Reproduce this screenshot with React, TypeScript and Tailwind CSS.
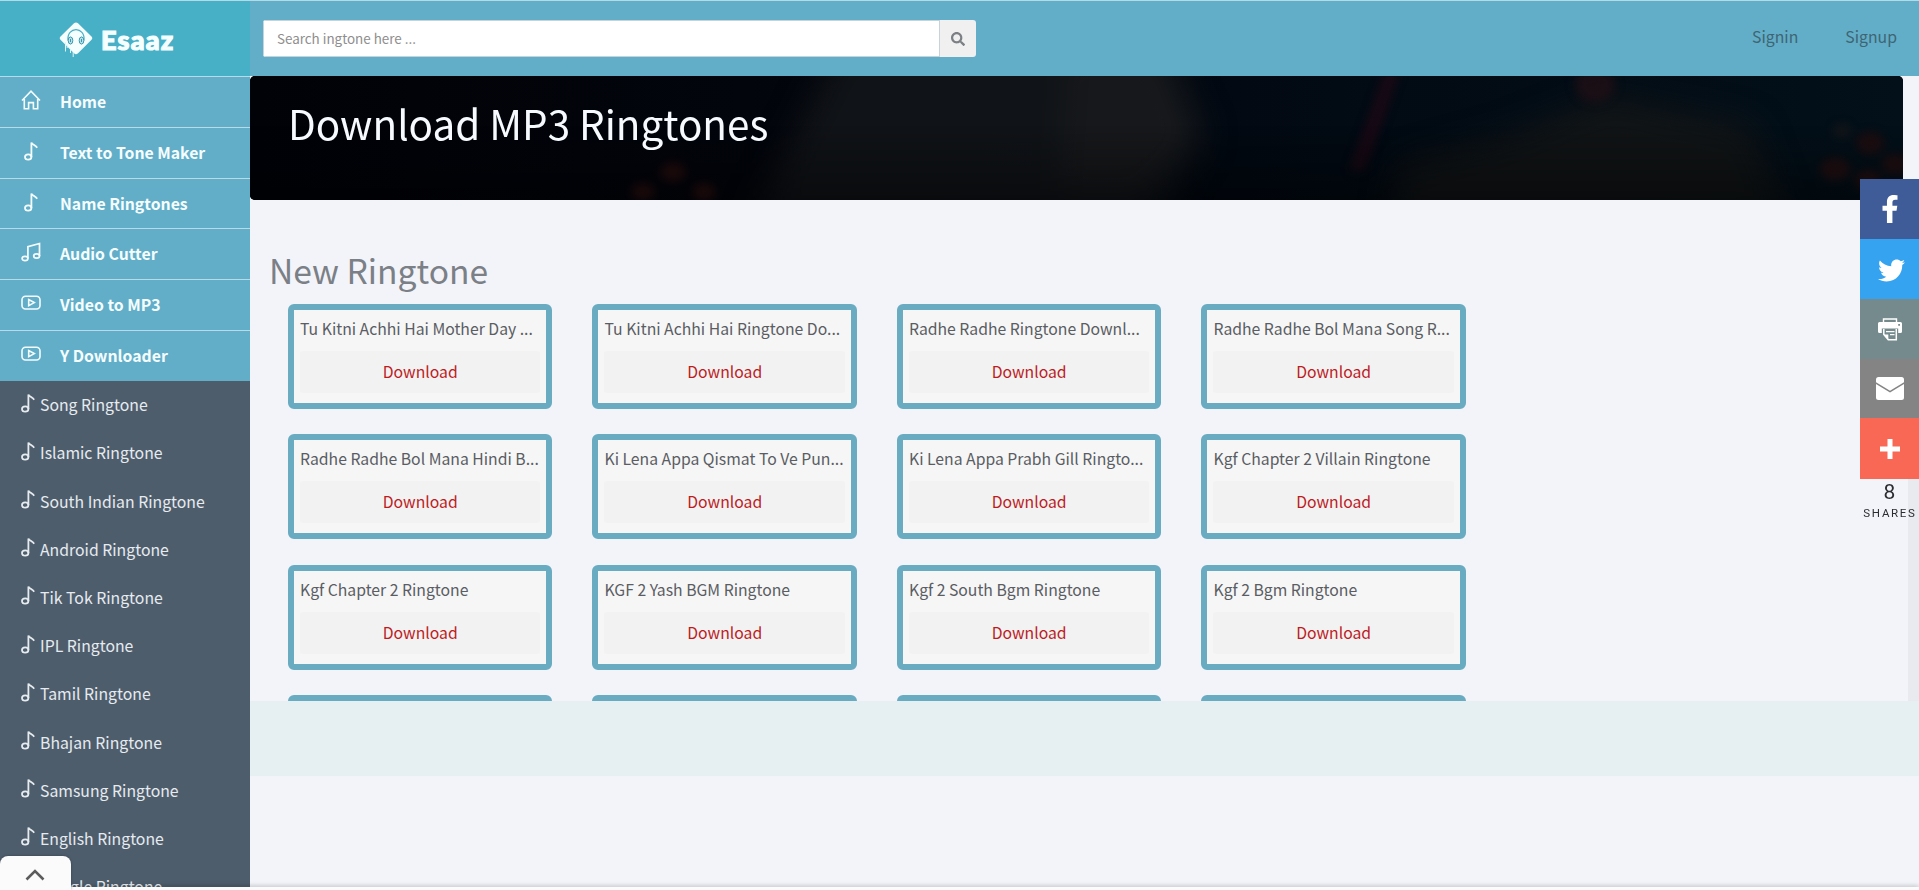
import React from "react";
import { FaFacebookF, FaTwitter, FaSearch } from "react-icons/fa";

type IconProps = { className?: string };

function HomeIcon({ className }: IconProps) {
  return (
    <svg className={className} viewBox="0 0 20 20" width="20" height="20" fill="none" stroke="currentColor" strokeWidth="1.6">
      <path d="M1 10.500 10 1.200l9 9.300M3.300 9v9.800h4.300v-6.200h4.800v6.200h4.300V9" />
    </svg>
  );
}

function NoteIcon({ className }: IconProps) {
  return (
    <svg className={className} viewBox="0 0 14 20" width="14" height="20" fill="none" stroke="currentColor" strokeWidth="1.8">
      <ellipse cx="4.200" cy="16" rx="3.200" ry="2.700" />
      <path d="M7.400 16V1.500c.8 2 4 2.800 5.800 5.200" />
    </svg>
  );
}

function DoubleNoteIcon({ className }: IconProps) {
  return (
    <svg className={className} viewBox="0 0 20 20" width="20" height="20" fill="none" stroke="currentColor" strokeWidth="1.700">
      <ellipse cx="4" cy="16.500" rx="2.900" ry="2.200" />
      <ellipse cx="15.600" cy="14" rx="2.900" ry="2.200" />
      <path d="M6.900 16.500V4.600L18.500 1.500V14" />
    </svg>
  );
}

function VideoIcon({ className }: IconProps) {
  return (
    <svg className={className} viewBox="0 0 20 16" width="20" height="16" fill="none" stroke="currentColor" strokeWidth="1.600">
      <rect x="1" y="1.200" width="18" height="12.800" rx="3.500" />
      <path d="M7.700 4.500v6.200l5.600-3.100z" />
    </svg>
  );
}

function LogoMark() {
  return (
    <svg width="34" height="36" viewBox="0 0 34 36" className="shrink-0">
      <path d="M15 1.300q2-1.700 4 0L32.500 14.500q1.500 1.700 0 3.200L19 31.300q-2 1.700-4 0L1.500 17.700q-1.500-1.500 0-3.200z" fill="#f6ffff" />
      <path d="M6.500 20v9.500M8.200 22v4M14.200 30v5M11.500 27v4" stroke="#dff5f8" strokeWidth="1" />
      <path d="M9 18.500C7.500 4 26.500 4 25 18.500" fill="none" stroke="#47b0c7" strokeWidth="1.200" />
      <ellipse cx="11.500" cy="18.500" rx="2.300" ry="3.600" fill="#b9e2ea" stroke="#3d98ae" strokeWidth="1" />
      <ellipse cx="22.500" cy="18.500" rx="2.300" ry="3.600" fill="#b9e2ea" stroke="#3d98ae" strokeWidth="1" />
      <path d="M11.500 17v3M22.500 17v3" stroke="#3d98ae" strokeWidth="1" />
    </svg>
  );
}

function PrinterIcon() {
  return (
    <svg width="24" height="23" viewBox="0 0 24 23" fill="none">
      <path d="M5.500 5.500V1h13v4.500" stroke="#fff" strokeWidth="1.400" />
      <path fillRule="evenodd" d="M1.500 4h21q1.500 0 1.500 1.500v8q0 1.500-1.500 1.500h-2.300v-4.500H3.800V15H1.500Q0 15 0 13.500v-8Q0 4 1.500 4zM20.200 6v1.800H22V6z" fill="#fff" />
      <path d="M5.800 11v5.500l4.500 5.300h8V11" stroke="#fff" strokeWidth="1.500" />
      <path d="M5.800 16.500h4.500V22zM8 13h8.500v1.200H8zM12 16h4.500v1.200H12z" fill="#fff" />
    </svg>
  );
}

function MailIcon() {
  return (
    <svg width="28" height="23" viewBox="0 0 28 23" fill="#fff">
      <path d="M2.500 0h23Q28 0 28 2.500v2.800L14 13.800 0 5.300V2.500Q0 0 2.500 0z" />
      <path d="M0 7l14 8.500L28 7v13.500q0 2.500-2.500 2.500h-23Q0 23 0 20.500z" />
    </svg>
  );
}

const navItems = [
  { label: "Home", Icon: HomeIcon },
  { label: "Text to Tone Maker", Icon: NoteIcon },
  { label: "Name Ringtones", Icon: NoteIcon },
  { label: "Audio Cutter", Icon: DoubleNoteIcon },
  { label: "Video to MP3", Icon: VideoIcon },
  { label: "Y Downloader", Icon: VideoIcon },
];

const categories = ["Song", "Islamic", "South Indian", "Android", "Tik Tok", "IPL", "Tamil", "Bhajan", "Samsung", "English", "Google"];

const ringtones = [
  "Tu Kitni Achhi Hai Mother Day ...",
  "Tu Kitni Achhi Hai Ringtone Do...",
  "Radhe Radhe Ringtone Downl...",
  "Radhe Radhe Bol Mana Song R...",
  "Radhe Radhe Bol Mana Hindi B...",
  "Ki Lena Appa Qismat To Ve Pun...",
  "Ki Lena Appa Prabh Gill Ringto...",
  "Kgf Chapter 2 Villain Ringtone",
  "Kgf Chapter 2 Ringtone",
  "KGF 2 Yash BGM Ringtone",
  "Kgf 2 South Bgm Ringtone",
  "Kgf 2 Bgm Ringtone",
];

const upcoming = [0, 1, 2, 3];

function Sidebar() {
  return (
    <aside className="flex w-[250px] shrink-0 flex-col overflow-hidden bg-[#4e5d6c]">
      <div className="flex h-[75px] shrink-0 items-center gap-[8px] bg-[#47b0c7] pl-[59px] pt-[3px]">
        <LogoMark />
        <span className="pb-[2px] font-['Lato',sans-serif] text-[27px] font-black leading-none tracking-[1.200px] text-[#f6ffff] [-webkit-text-stroke:1.200px_#f6ffff]">Esaaz</span>
      </div>
      <nav className="flex h-[305px] shrink-0 flex-col bg-[#62aec8]">
        {navItems.map(({ label, Icon }) => (
          <a key={label} className="flex flex-1 items-center border-t border-[#b5dce8] text-[15.800px] font-bold text-[#f5fdff]">
            <span className="flex w-[60px] justify-center pb-[4px] pl-[2px]">
              <Icon />
            </span>
            <span className="leading-5">{label}</span>
          </a>
        ))}
      </nav>
      <ul className="shrink-0">
        {categories.map((name) => (
          <li key={name} className="flex h-[48.200px] items-center pl-[21px] text-[15.800px] text-[#e6ebf0]">
            <NoteIcon className="mb-[5px] mr-[5px]" />
            <span>{name} Ringtone</span>
          </li>
        ))}
      </ul>
    </aside>
  );
}

function Header() {
  return (
    <header className="flex h-[75px] shrink-0 items-center justify-between bg-[#62aec8] pl-[13px] pr-[22px]">
      <div className="flex h-[37px] w-[713px] overflow-hidden rounded-[3px]">
        <div className="flex flex-1 items-center border border-[#c6d3d9] bg-white pl-[13px] text-[13.400px] text-[#8e8e8e]">Search ingtone here ...</div>
        <button className="flex w-[36px] items-center justify-center bg-[#f0f0f0] text-[#7c8084]">
          <FaSearch size={14} />
        </button>
      </div>
      <div className="flex gap-[47px] pb-[3px] text-[15.800px] text-[#3f6573]">
        <a>Signin</a>
        <a>Signup</a>
      </div>
    </header>
  );
}

function HeroBackdrop() {
  return (
    <svg className="absolute inset-0" width="1653" height="124" viewBox="0 0 1653 124">
      <defs>
        <filter id="soft" x="-30%" y="-50%" width="160%" height="200%" colorInterpolationFilters="sRGB">
          <feGaussianBlur stdDeviation="16" />
        </filter>
        <filter id="spot" x="-40%" y="-40%" width="180%" height="180%" colorInterpolationFilters="sRGB">
          <feGaussianBlur stdDeviation="5" />
        </filter>
        <linearGradient id="base" x1="0" x2="1" y1="0" y2="0">
          <stop offset="0" stopColor="#010208" />
          <stop offset=".4" stopColor="#03060d" />
          <stop offset=".6" stopColor="#020912" />
          <stop offset="1" stopColor="#031019" />
        </linearGradient>
        <linearGradient id="shade" x1="0" x2="0" y1="0" y2="1">
          <stop offset=".4" stopColor="#000" stopOpacity="0" />
          <stop offset="1" stopColor="#000" stopOpacity=".4" />
        </linearGradient>
      </defs>
      <rect width="1653" height="124" fill="url(#base)" />
      <g filter="url(#soft)">
        <path d="M590-30H910L955 60 900 150H500z" fill="#14171a" opacity=".8" />
        <path d="M820-30h100l30 90-60 55h-80z" fill="#1e1e1f" opacity=".5" />
        <path d="M1150 90 1260 60 1360 20 1500 50 1540 150H1140z" fill="#151616" opacity=".8" />
      </g>
      <g filter="url(#spot)">
        <path d="M1135-5h15l-35 100h-16z" fill="#260915" opacity=".6" />
        <ellipse cx="1345" cy="8" rx="20" ry="18" fill="#241016" opacity=".7" />
      </g>
      <rect width="1653" height="124" fill="url(#shade)" />
      <g filter="url(#spot)" fill="#240c0c" opacity=".7">
        <ellipse cx="423" cy="96" rx="13" ry="10" />
        <ellipse cx="393" cy="116" rx="12" ry="9" />
        <ellipse cx="454" cy="116" rx="12" ry="9" />
        <ellipse cx="1620" cy="67" rx="14" ry="11" />
        <ellipse cx="1585" cy="93" rx="15" ry="11" />
        <ellipse cx="1645" cy="88" rx="13" ry="10" />
        <ellipse cx="1618" cy="104" rx="13" ry="10" />
        <ellipse cx="1592" cy="55" rx="9" ry="7" fill="#1a1819" />
      </g>
    </svg>
  );
}

function ShareBar() {
  return (
    <div className="absolute left-[1860px] top-[179px] flex w-[59px] flex-col text-white">
      <a className="flex h-[60px] items-center justify-center bg-[#3f5b98]">
        <FaFacebookF size={28} />
      </a>
      <a className="flex h-[60px] items-center justify-center bg-[#36a3f0] pl-[3px] pt-[2px]">
        <FaTwitter size={27} />
      </a>
      <a className="flex h-[60px] items-center justify-center bg-[#758a8d] pl-px">
        <PrinterIcon />
      </a>
      <a className="flex h-[59px] items-center justify-center bg-[#848484] pl-px">
        <MailIcon />
      </a>
      <a className="flex h-[61px] items-center justify-center bg-[#f96854] pl-px">
        <svg width="20" height="20" viewBox="0 0 20 20">
          <path d="M10 0v20M0 10h20" stroke="#fff" strokeWidth="5" />
        </svg>
      </a>
      <div className="flex flex-col items-center whitespace-nowrap font-['Roboto',sans-serif] text-[#2b2d30]">
        <span className="pt-[2px] text-[21px] leading-[22px]">8</span>
        <span className="pl-[1px] pt-[4px] text-[11.500px] leading-[13px] tracking-[1.700px]">SHARES</span>
      </div>
    </div>
  );
}

export default function App() {
  return (
    <div className="relative flex h-[890px] w-[1919px] flex-col overflow-hidden bg-[#f3f4f9] font-['Noto_Sans_CJK_SC',sans-serif]">
      <div className="h-px shrink-0 bg-[#b3dbe7]" />
      <div className="flex min-h-0 flex-1">
        <Sidebar />
        <div className="flex flex-1 flex-col">
          <Header />
          <main className="flex h-[625px] flex-col overflow-hidden">
            <div className="flex min-h-0 flex-1">
              <div className="flex w-[1658px] flex-col overflow-hidden">
                <section className="relative h-[124px] w-[1653px] shrink-0 overflow-hidden rounded-[5px] bg-[#02050a]">
                  <HeroBackdrop />
                  <h1 className="relative pl-[38px] pt-[17px] text-[40.400px] leading-[60px] text-[#f7fbff]">Download MP3 Ringtones</h1>
                </section>
                <h2 className="shrink-0 pl-[19px] pt-[45px] text-[33.600px] leading-[50px] text-[#7b8087]">New Ringtone</h2>
                <div className="mt-[9px] grid shrink-0 grid-cols-[repeat(4,264.400px)] gap-x-[40.100px] gap-y-[25.300px] pl-[38px]">
                  {ringtones.map((title) => (
                    <article key={title} className="flex h-[105px] flex-col rounded-[6px] border-[6px] border-[#69acc2] bg-[#f6f6f6] px-[6px]">
                      <h3 className="h-[41px] whitespace-nowrap pt-[7px] text-[15.750px] leading-[24px] text-[#5a5d63]">{title}</h3>
                      <a className="flex h-[42px] items-center justify-center rounded-[3px] bg-[#f2f2f2] text-[15.750px] text-[#bd1c1f]">Download</a>
                    </article>
                  ))}
                  {upcoming.map((slot) => (
                    <article key={slot} className="h-[105px] rounded-[6px] border-[6px] border-[#69acc2] bg-[#f6f6f6]" />
                  ))}
                </div>
              </div>
              <div className="mt-[124px] flex-1 bg-[#e9eaef]" />
            </div>
          </main>
          <footer className="h-[75px] shrink-0 bg-[#e6eff2]" />
        </div>
      </div>
      <div className="h-[3px] shrink-0 bg-[#fcfcfc] shadow-[0_-1px_4px_rgba(0,0,0,0.25)]" />
      <ShareBar />
      <button className="absolute left-0 top-[856px] flex h-[34px] w-[71px] items-center justify-center rounded-t-[8px] bg-[#fbfbfb] pt-[3px] pr-px shadow-[0_0_3px_rgba(0,0,0,0.3)]">
        <svg width="20" height="12" viewBox="0 0 20 12" fill="none" stroke="#5c5c5c" strokeWidth="2.600">
          <path d="M1.500 10.500 10 2l8.500 8.500" />
        </svg>
      </button>
    </div>
  );
}
